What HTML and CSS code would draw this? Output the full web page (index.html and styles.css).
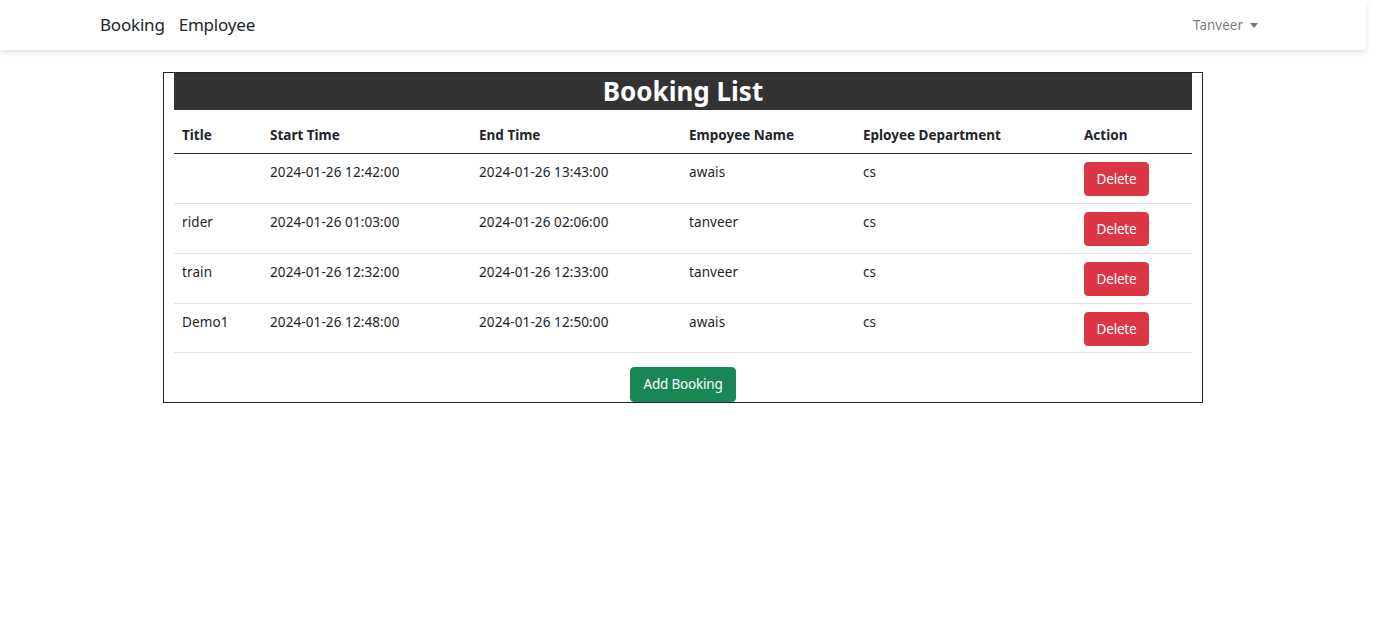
FILE: index.html
```html
<!DOCTYPE html>
<html lang="en">
<head>
<meta charset="utf-8">
<title>Booking List</title>
<link rel="stylesheet" href="styles.css">
</head>
<body>
<div class="page">
  <nav class="navbar">
    <div class="nav-links">
      <a class="nav-link" href="#">Booking</a>
      <a class="nav-link" href="#">Employee</a>
    </div>
    <div class="user">Tanveer <span class="caret"></span></div>
  </nav>
  <main class="box">
    <h2 class="title">Booking List</h2>
    <table class="table">
      <colgroup>
        <col class="c1"><col class="c2"><col class="c3"><col class="c4"><col class="c5"><col class="c6">
      </colgroup>
      <thead>
        <tr><th>Title</th><th>Start Time</th><th>End Time</th><th>Empoyee Name</th><th>Eployee Department</th><th>Action</th></tr>
      </thead>
      <tbody>
        <tr><td></td><td>2024-01-26 12:42:00</td><td>2024-01-26 13:43:00</td><td>awais</td><td>cs</td><td><button class="btn btn-danger">Delete</button></td></tr>
        <tr><td>rider</td><td>2024-01-26 01:03:00</td><td>2024-01-26 02:06:00</td><td>tanveer</td><td>cs</td><td><button class="btn btn-danger">Delete</button></td></tr>
        <tr><td>train</td><td>2024-01-26 12:32:00</td><td>2024-01-26 12:33:00</td><td>tanveer</td><td>cs</td><td><button class="btn btn-danger">Delete</button></td></tr>
        <tr><td>Demo1</td><td>2024-01-26 12:48:00</td><td>2024-01-26 12:50:00</td><td>awais</td><td>cs</td><td><button class="btn btn-danger">Delete</button></td></tr>
      </tbody>
    </table>
    <div class="actions"><button class="btn btn-success">Add Booking</button></div>
  </main>
</div>
</body>
</html>
```
FILE: styles.css
```css
* { box-sizing: border-box; }
html, body { margin: 0; padding: 0; background: #fff; }
body {
  font-family: "Noto Sans", "Open Sans", "Liberation Sans", sans-serif;
  color: #212529;
  font-size: 14px;
  line-height: 1.5;
}
.page { width: 1366px; }
.navbar {
  height: 50px;
  background: #fff;
  box-shadow: 0 2px 5px rgba(0, 0, 0, 0.12);
  display: flex;
  align-items: center;
  justify-content: space-between;
  padding: 0 108px 0 100px;
}
.nav-links { display: flex; gap: 14px; }
.nav-link {
  color: #212529;
  text-decoration: none;
  font-size: 17px;
  letter-spacing: -0.2px;
}
.user {
  color: rgba(0, 0, 0, 0.55);
  font-size: 13.5px;
  display: flex;
  align-items: center;
  gap: 7px;
  padding-left: 2px;
}
.caret {
  width: 0; height: 0;
  border-left: 4px solid transparent;
  border-right: 4px solid transparent;
  border-top: 5px solid rgba(0, 0, 0, 0.55);
  margin-top: 1px;
}
.box {
  width: 1040px;
  margin: 22px auto 0;
  border: 1px solid #212529;
  padding: 0 10px;
}
.title {
  margin: 0 0 6px;
  background: #333;
  color: #fff;
  text-align: center;
  font-size: 26px;
  font-weight: 700;
  line-height: 37px;
}
.table {
  width: 100%;
  border-collapse: collapse;
  table-layout: fixed;
  margin-bottom: 14px;
}
.c1 { width: 88px; }
.c2 { width: 209px; }
.c3 { width: 210px; }
.c4 { width: 174px; }
.c5 { width: 221px; }
.c6 { width: 116px; }
.table th {
  text-align: left;
  font-weight: 700;
  font-size: 13.5px;
  padding: 9px 8px 8px;
  border-bottom: 1.5px solid #212529;
  white-space: nowrap;
}
.table td {
  vertical-align: top;
  padding: 8px 8px 7px;
  border-bottom: 1px solid #dee2e6;
  font-size: 13.5px;
  letter-spacing: 0.1px;
  white-space: nowrap;
}
.table tbody tr:last-child td { padding-bottom: 6px; }
.btn {
  font-family: inherit;
  font-size: 13.5px;
  line-height: 20px;
  padding: 6px 12px;
  border: 1px solid transparent;
  border-radius: 4px;
  color: #fff;
  cursor: pointer;
  letter-spacing: -0.2px;
}
.btn-danger { background: #dc3545; border-color: #dc3545; width: 65px; padding: 6px 0; }
.btn-success { background: #198754; border-color: #198754; width: 106px; padding: 6px 0; line-height: 21px; }
.actions { display: flex; justify-content: center; }
```
